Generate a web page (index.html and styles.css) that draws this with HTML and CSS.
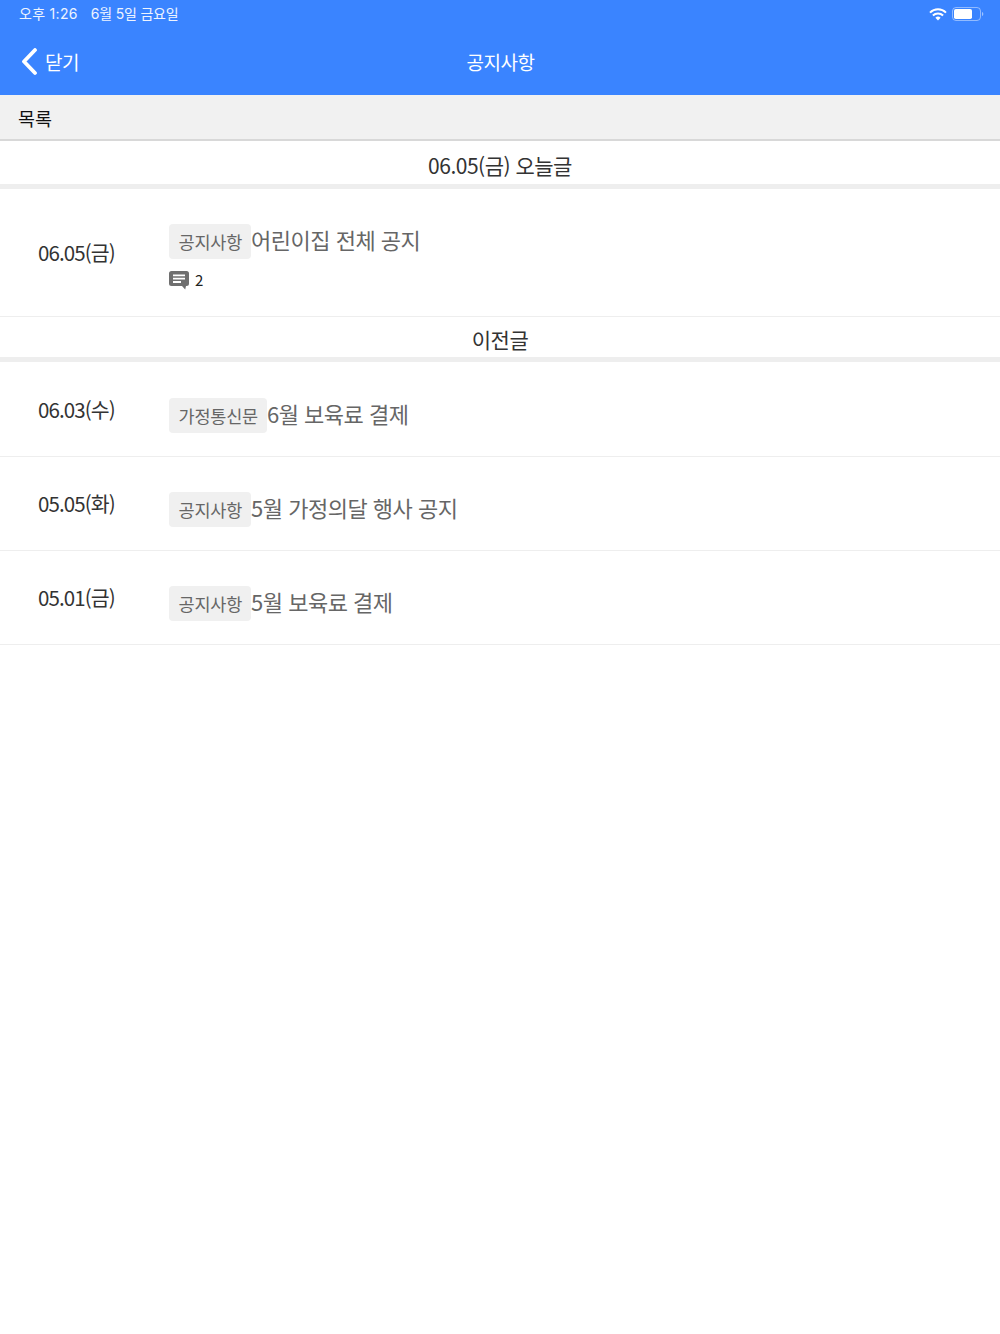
FILE: index.html
```html
<!DOCTYPE html>
<html lang="ko">
<head>
<meta charset="utf-8">
<title>공지사항</title>
<link rel="stylesheet" href="styles.css">
</head>
<body>
<header class="appbar">
  <div class="status">
    <span class="status-time">오후 1:26</span>
    <span class="status-date">6월 5일 금요일</span>
    <span class="status-icons">
      <svg class="wifi" width="18" height="13" viewBox="0 0 18 13"><path d="M1 4.600a11.400 11.400 0 0 1 16 0" fill="none" stroke="#fff" stroke-width="2"/><path d="M3.900 7.500a7.300 7.300 0 0 1 10.200 0" fill="none" stroke="#fff" stroke-width="2"/><path d="M9 12.600l-2.600-2.800a3.700 3.700 0 0 1 5.200 0z" fill="#fff"/></svg>
      <svg class="battery" width="32" height="14" viewBox="0 0 32 14"><rect x=".5" y=".5" width="28" height="13" rx="3.500" fill="none" stroke="#fff" stroke-opacity=".45"/><rect x="2" y="2" width="18" height="10" rx="1.800" fill="#fff"/><path d="M30 5v4c.8-.3 1.300-1.100 1.300-2s-.5-1.700-1.300-2z" fill="#fff" fill-opacity=".5"/></svg>
    </span>
  </div>
  <nav class="nav">
    <a class="back">
      <svg width="18" height="28" viewBox="0 0 18 28"><path d="M15 2 4 13.500l11 11.500" fill="none" stroke="#fff" stroke-width="3.800" stroke-linecap="round" stroke-linejoin="round"/></svg>
      <span>닫기</span>
    </a>
    <h1 class="nav-title">공지사항</h1>
  </nav>
</header>
<div class="listbar">목록</div>
<main>
  <h2 class="section section-first">06.05(금) 오늘글</h2>
  <article class="row row-tall">
    <div class="date">06.05(금)</div>
    <div class="body">
      <div class="title-line"><span class="tag">공지사항</span><span class="title">어린이집 전체 공지</span></div>
      <div class="comments">
        <svg width="20" height="19" viewBox="0 0 20 19"><path d="M2.500 0h15A2.500 2.500 0 0 1 20 2.500v10a2.500 2.500 0 0 1-2.500 2.500H17l-.8 3.500L13 15H2.500A2.500 2.500 0 0 1 0 12.500v-10A2.500 2.500 0 0 1 2.500 0z" fill="#6f6f6f"/><path d="M4 3.500h12v1.800H4zM4 6.800h12v1.800H4zM4 10.100h8v1.800H4z" fill="#fff"/></svg>
        <span>2</span>
      </div>
    </div>
  </article>
  <h2 class="section">이전글</h2>
  <article class="row row-lead">
    <div class="date">06.03(수)</div>
    <div class="body"><div class="title-line"><span class="tag">가정통신문</span><span class="title">6월 보육료 결제</span></div></div>
  </article>
  <article class="row">
    <div class="date">05.05(화)</div>
    <div class="body"><div class="title-line"><span class="tag">공지사항</span><span class="title">5월 가정의달 행사 공지</span></div></div>
  </article>
  <article class="row">
    <div class="date">05.01(금)</div>
    <div class="body"><div class="title-line"><span class="tag">공지사항</span><span class="title">5월 보육료 결제</span></div></div>
  </article>
</main>
</body>
</html>
```
FILE: styles.css
```css
* { box-sizing: border-box; }
html, body { margin: 0; padding: 0; }
body {
  width: 1000px;
  height: 1334px;
  overflow: hidden;
  background: #fff;
  font-family: "Noto Sans CJK KR", "Noto Sans", sans-serif;
  color: #333;
}
.appbar { height: 95px; background: #3a84ff; color: #fff; }
.status {
  height: 28px;
  padding: 0 16px 0 19px;
  display: flex;
  align-items: center;
  font-family: Inter, "Noto Sans CJK KR", sans-serif;
  font-size: 14px;
  line-height: 28px;
  color: #eef4ff;
}
.status-time { margin-right: 13px; letter-spacing: 0.3px; }
.status-date { letter-spacing: -0.2px; }
.status-icons { margin-left: auto; display: flex; align-items: center; gap: 5px; }
.nav { position: relative; height: 67px; display: flex; align-items: center; justify-content: center; }
.back {
  position: absolute;
  left: 21px;
  top: 6px;
  height: 56px;
  display: flex;
  align-items: center;
  gap: 7px;
  font-size: 19px;
  letter-spacing: -0.5px;
}
.back span { margin-top: -1px; }
.back svg { margin-left: -1px; }
.nav-title { margin: -1px 0 0 1px; font-size: 19px; font-weight: 400; letter-spacing: -0.5px; }
.listbar {
  height: 46px;
  padding: 0 0 0 18px;
  background: #f1f1f1;
  border-bottom: 2px solid #d8d8d8;
  color: #111;
  font-size: 18.500px;
  line-height: 46px;
  letter-spacing: -0.1px;
}
.section {
  margin: 0;
  height: 45px;
  border-bottom: 5px solid #eeeeee;
  text-align: center;
  font-size: 21px;
  font-weight: 400;
  line-height: 45px;
  letter-spacing: -0.5px;
  color: #333;
}
.section-first { height: 48px; line-height: 48px; }
.row {
  height: 94px;
  display: flex;
  border-bottom: 1px solid #eeeeee;
}
.row-tall { height: 128px; }
.row-lead { height: 95px; }
.date {
  width: 169px;
  padding: 29px 0 0 38px;
  font-size: 20.500px;
  line-height: 34px;
  letter-spacing: -0.9px;
  color: #333;
  flex: none;
}
.row-lead .date { padding-top: 30px; }
.row-tall .date { padding-top: 46px; }
.body { padding-top: 35px; }
.row-lead .body { padding-top: 36px; }
.row-tall .body { padding-top: 35px; }
.title-line { display: flex; align-items: center; height: 35px; }
.tag {
  height: 35px;
  padding: 0 9px 0 9.500px;
  background: #f0f0f0;
  border-radius: 4px;
  color: #666;
  font-size: 17.500px;
  line-height: 36px;
  letter-spacing: -0.2px;
}
.title {
  color: #666;
  font-size: 22px;
  line-height: 33px;
  margin: -5px 0 0 0;
  letter-spacing: -0.5px;
}
.comments {
  display: flex;
  align-items: center;
  gap: 6px;
  margin-top: 10px;
  height: 20px;
  font-size: 15px;
  color: #222;
}
.comments svg { margin-top: 2px; }
```
